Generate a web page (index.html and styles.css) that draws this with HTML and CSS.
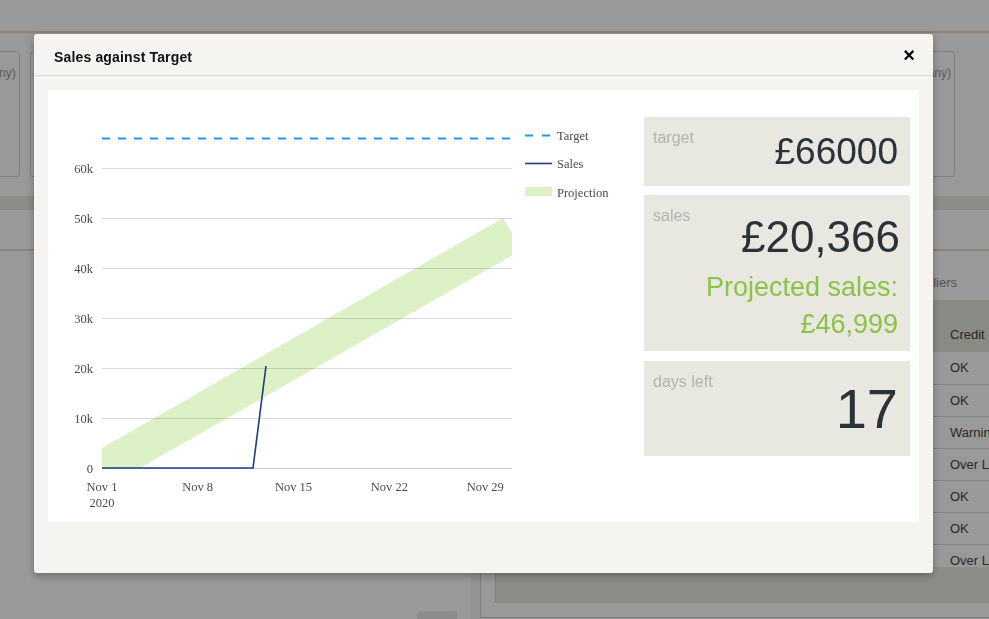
FILE: index.html
```html
<!DOCTYPE html>
<html lang="en">
<head>
  <meta charset="UTF-8">
  <meta name="viewport" content="width=device-width, initial-scale=1.0">
  <title>Dashboard - Sales against Target</title>
  <link rel="stylesheet" href="styles.css">
</head>
<body>
  <!-- page behind the dialog -->
  <div class="page">
    <div class="topbar"></div>

    <div class="summary">
      <div class="summary-card"><span>Overdue (if any)</span></div>
      <div class="summary-card"></div>
      <div class="summary-card"></div>
      <div class="summary-card"><span>On hold (if any)</span></div>
    </div>

    <div class="strip"></div>
    <div class="subnav"></div>

    <div class="main">
      <div class="main-left">
        <button class="ghost-btn" type="button"></button>
      </div>
      <div class="main-right">
        <div class="panel">
          <div class="panel-tabs">
            <span>Suppliers</span>
          </div>
          <div class="table-wrap">
            <table class="accounts">
              <colgroup>
                <col class="col-name">
                <col class="col-balance">
                <col class="col-credit">
              </colgroup>
              <thead>
                <tr><th></th><th></th><th>Credit</th></tr>
              </thead>
              <tbody>
                <tr><td></td><td></td><td>OK</td></tr>
                <tr><td></td><td></td><td>OK</td></tr>
                <tr><td></td><td></td><td>Warning</td></tr>
                <tr><td></td><td></td><td>Over Limit</td></tr>
                <tr><td></td><td></td><td>OK</td></tr>
                <tr><td></td><td></td><td>OK</td></tr>
                <tr><td></td><td></td><td>Over Limit</td></tr>
              </tbody>
            </table>
          </div>
          <div class="panel-foot"></div>
        </div>
      </div>
    </div>
  </div>

  <div class="overlay"></div>

  <!-- Sales against Target dialog -->
  <div class="modal" role="dialog" aria-labelledby="modalTitle">
    <div class="modal-header">
      <h4 id="modalTitle">Sales against Target</h4>
      <button class="close" type="button" aria-label="Close">&times;</button>
    </div>

    <div class="modal-body">
      <div class="sheet">
        <svg class="chart" width="596" height="432" viewBox="48 90 596 432">
          <!-- projection band -->
          <polygon class="band" points="102,448 503,218 512,233 512,255.5 140,468 102,468"/>

          <!-- grid -->
          <g class="grid">
            <line x1="102" y1="168.5" x2="512" y2="168.5"/>
            <line x1="102" y1="218.5" x2="512" y2="218.5"/>
            <line x1="102" y1="268.5" x2="512" y2="268.5"/>
            <line x1="102" y1="318.5" x2="512" y2="318.5"/>
            <line x1="102" y1="368.5" x2="512" y2="368.5"/>
            <line x1="102" y1="418.5" x2="512" y2="418.5"/>
            <line class="axis" x1="102" y1="468.5" x2="512" y2="468.5"/>
          </g>

          <!-- sales -->
          <polyline class="sales" points="102,468 253,468 266,366"/>

          <!-- target -->
          <line class="target" x1="102" y1="138.5" x2="512" y2="138.5"/>

          <g class="y-labels">
            <text x="93" y="172.5">60k</text>
            <text x="93" y="222.5">50k</text>
            <text x="93" y="272.5">40k</text>
            <text x="93" y="322.5">30k</text>
            <text x="93" y="372.5">20k</text>
            <text x="93" y="422.5">10k</text>
            <text x="93" y="472.5">0</text>
          </g>

          <g class="x-labels">
            <text x="102" y="491">Nov 1</text>
            <text x="102" y="507">2020</text>
            <text x="197.6" y="491">Nov 8</text>
            <text x="293.5" y="491">Nov 15</text>
            <text x="389.4" y="491">Nov 22</text>
            <text x="485.3" y="491">Nov 29</text>
          </g>

          <g class="legend">
            <line class="target" x1="525" y1="135.5" x2="551" y2="135.5"/>
            <text x="557" y="140">Target</text>
            <line class="sales" x1="525" y1="163.5" x2="552" y2="163.5"/>
            <text x="557" y="168">Sales</text>
            <rect class="band" x="525" y="187" width="27" height="9"/>
            <text x="557" y="197">Projection</text>
          </g>
        </svg>

        <div class="stats">
          <div class="stat stat-target">
            <div class="stat-label">target</div>
            <div class="stat-value">£66000</div>
          </div>
          <div class="stat stat-sales">
            <div class="stat-label">sales</div>
            <div class="stat-value">
              <div class="stat-number">£20,366</div>
              <div class="stat-projected">Projected sales:<br>£46,999</div>
            </div>
          </div>
          <div class="stat stat-days">
            <div class="stat-label">days left</div>
            <div class="stat-value">17</div>
          </div>
        </div>
      </div>
    </div>
  </div>
</body>
</html>
```

FILE: styles.css
```css
/* Reset and base */
* {
  box-sizing: border-box;
  margin: 0;
  padding: 0;
}

body {
  font-family: 'Liberation Sans', Arial, Helvetica, sans-serif;
  background: #ffffff;
  color: #333;
  overflow: hidden;
  height: 619px;
}

/* ---- page behind the dialog ---- */
.topbar {
  height: 33px;
  border-bottom: 2px solid #efd5bd;
}

.summary {
  display: grid;
  grid-template-columns: repeat(4, 1fr);
  gap: 10px;
  margin: 18px 34px 0 -282px;
}

.summary-card {
  height: 126px;
  border: 1px solid #d5d5d5;
  border-radius: 3px;
  padding: 14px 3px;
  text-align: right;
  font-size: 12px;
  color: #999;
}

.strip {
  margin-top: 19px;
  height: 14px;
  background: #e9e9e3;
}

.subnav {
  height: 41px;
  border-bottom: 2px solid #efd5bd;
}

.main {
  display: grid;
  grid-template-columns: 470px 1fr;
  height: 368px;
}

.main-left {
  padding: 360px 13px 0 0;
  text-align: right;
}

.ghost-btn {
  width: 40px;
  height: 24px;
  border: none;
  border-radius: 4px;
  background: #e9e9e9;
}

.main-right {
  background: #f5f5f2;
  padding-left: 10px;
}

.panel {
  background: #fff;
  border-left: 1px solid #d0d0cc;
  border-bottom: 1px solid #d0d0cc;
  padding: 0 0 14px 14px;
}

.panel-tabs {
  display: flex;
  justify-content: flex-end;
  height: 49px;
  padding: 24px 32px 0 0;
  font-size: 13px;
  line-height: 15px;
  color: #8c8c8c;
}

.table-wrap {
  height: 267px;
  overflow: hidden;
}

.accounts {
  width: 100%;
  table-layout: fixed;
  border-collapse: collapse;
  font-size: 13px;
  line-height: 15px;
  color: #444;
}

.col-name { width: 300px; }
.col-balance { width: 150px; }

.accounts th {
  height: 52px;
  background: #e6e6de;
  text-align: left;
  font-weight: normal;
  vertical-align: bottom;
  padding: 0 0 10px 5px;
  white-space: nowrap;
  overflow: hidden;
}

.accounts td {
  height: 32px;
  padding: 0 0 0 5px;
  border-bottom: 1px solid #d9d9d9;
  white-space: nowrap;
  overflow: hidden;
}

.panel-foot {
  height: 36px;
  background: #e9e9e3;
  border-left: 1px solid #d0d0cc;
}

/* ---- dialog ---- */
.overlay {
  position: fixed;
  inset: 0;
  background: rgba(0, 0, 0, 0.4);
}

.modal {
  position: fixed;
  top: 34px;
  left: 34px;
  width: 899px;
  height: 539px;
  background: #f5f4f0;
  border-radius: 3px;
  box-shadow: 0 3px 9px rgba(0, 0, 0, 0.3);
}

.modal-header {
  display: flex;
  justify-content: space-between;
  align-items: flex-start;
  height: 42px;
  padding: 15px 18px 0 20px;
  border-bottom: 1px solid #dddbd6;
}

.modal-header h4 {
  font-size: 14px;
  font-weight: 700;
  line-height: normal;
  letter-spacing: 0.15px;
  color: #111;
}

.close {
  margin-top: -4px;
  border: none;
  background: none;
  font-family: 'Liberation Sans', Arial, sans-serif;
  font-size: 20px;
  font-weight: 700;
  line-height: 20px;
  color: #000;
  cursor: pointer;
}

.modal-body {
  padding: 14px;
}

.sheet {
  display: flex;
  height: 432px;
  background: #fff;
}

/* chart */
.chart {
  display: block;
  flex: none;
}

.chart text {
  font-family: 'Liberation Serif', 'Times New Roman', serif;
  font-size: 12.5px;
  fill: #4a4a4a;
}

.grid line {
  stroke: rgba(0, 0, 0, 0.15);
  stroke-width: 1;
}

.grid .axis {
  stroke: rgba(0, 0, 0, 0.2);
}

.band {
  fill: #ddf1c6;
}

.sales {
  fill: none;
  stroke: #1f3b82;
  stroke-width: 1.6;
}

.target {
  stroke: #1a9de0;
  stroke-width: 2;
  stroke-dasharray: 8 8;
}

.legend .target {
  stroke-dasharray: 8 9;
}

.y-labels text {
  text-anchor: end;
}

.x-labels text {
  text-anchor: middle;
}

/* stat cards */
.stats {
  width: 266px;
  margin: 27px 9px 0 0;
}

.stat {
  display: flex;
  justify-content: space-between;
  align-items: flex-start;
  background: #e8e7e0;
  padding: 12px 12px 13px 9px;
  margin-bottom: 9px;
}

.stat-label {
  font-size: 16px;
  line-height: 18px;
  color: #b3b3b0;
}

.stat-value {
  text-align: right;
  color: #2b3238;
  margin-top: 2px;
}

.stat-target .stat-value {
  font-size: 37px;
}

.stat-sales {
  padding-bottom: 8px;
  margin-bottom: 10px;
}

.stat-sales .stat-value {
  margin-top: 5px;
}

.stat-number {
  font-size: 44px;
  margin-right: -2px;
}

.stat-projected {
  margin-top: 7px;
  font-size: 27px;
  line-height: 37px;
  color: #8bc34a;
}

.stat-days {
  padding-bottom: 15px;
}

.stat-days .stat-value {
  margin-top: 3px;
  font-size: 56px;
}
```
